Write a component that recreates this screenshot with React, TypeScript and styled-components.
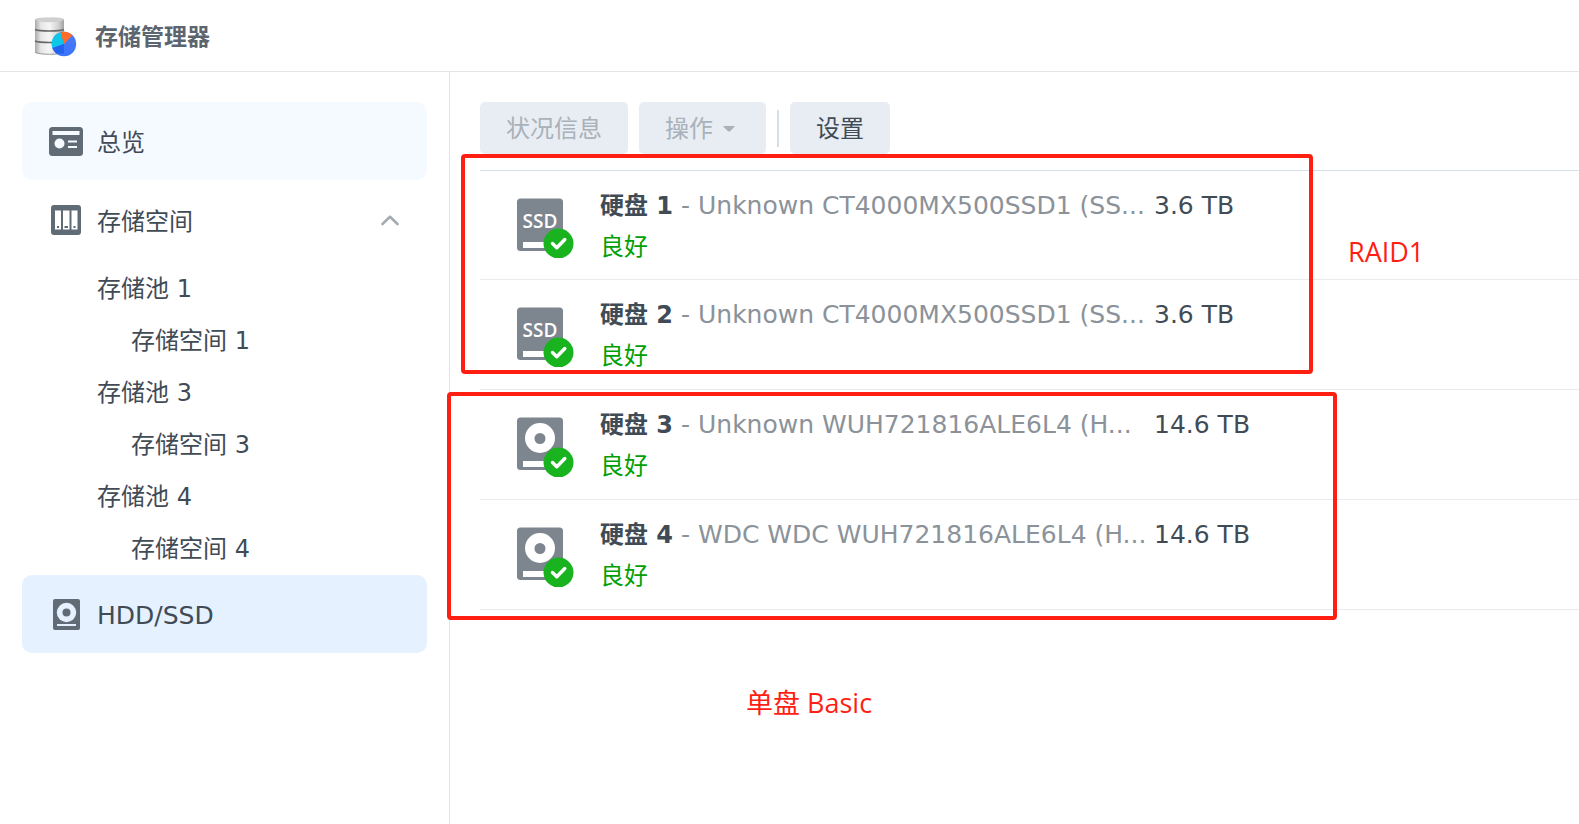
import React from "react";
import styled, { createGlobalStyle, css } from "styled-components";

const GlobalStyle = createGlobalStyle`
  *, *::before, *::after { box-sizing: border-box; }
  html, body { margin: 0; background: #fff; }
  body, button {
    font-family: "DejaVu Sans", "Noto Sans CJK SC", sans-serif;
    font-size: 24px;
    line-height: 32px;
    color: #414b55;
  }
`;

const Page = styled.div`
  min-height: 100vh;
  display: flex;
  flex-direction: column;
`;

const Header = styled.header`
  display: flex;
  align-items: center;
  gap: 18px;
  height: 72px;
  padding: 2px 34px 0;
  border-bottom: 1px solid #e3e5e7;
`;

const Title = styled.h1`
  margin: 0;
  font-size: 23px;
  line-height: 32px;
  font-weight: 700;
  color: #5c656f;
`;

const Body = styled.div`
  flex: 1;
  display: flex;
`;

const Sidebar = styled.nav`
  flex: none;
  display: flex;
  flex-direction: column;
  gap: 1px;
  width: 450px;
  padding: 30px 22px;
  border-right: 1px solid #e3e6e9;
`;

const itemState = {
  plain: "transparent",
  hovered: "#f4faff",
  selected: "#e5f1fe",
};

const NavItem = styled.button<{ $state: keyof typeof itemState }>`
  display: flex;
  align-items: center;
  width: 100%;
  height: 78px;
  padding: 0 28px 0 27px;
  border: 0;
  border-radius: 10px;
  background: ${(p) => itemState[p.$state]};
  text-align: left;
  cursor: pointer;
`;

const NavIcon = styled.span`
  display: flex;
  justify-content: center;
  width: 34px;
  margin-right: 14px;
`;

const NavLabel = styled.span<{ $latin?: boolean }>`
  flex: 1;
  padding-top: 3px;
  font-size: ${(p) => (p.$latin ? 25 : 24)}px;
`;

const SubList = styled.ul`
  margin: 0;
  padding: 2px 0 0;
  list-style: none;
`;

const SubItem = styled.button<{ $nested?: boolean }>`
  display: block;
  width: 100%;
  height: 52px;
  padding: 2px 0 0 ${(p) => (p.$nested ? 109 : 75)}px;
  border: 0;
  background: none;
  text-align: left;
  cursor: pointer;
`;

const Main = styled.main`
  position: relative;
  flex: 1;
  min-width: 0;
  padding: 30px 0 0 30px;
`;

const Toolbar = styled.div`
  display: flex;
  align-items: center;
  gap: 11px;
  margin-bottom: 16px;
`;

const ToolButton = styled.button<{ $menu?: boolean }>`
  display: flex;
  align-items: center;
  gap: 10px;
  height: 52px;
  padding: 2px ${(p) => (p.$menu ? 31 : 26)}px 0 26px;
  border: 0;
  border-radius: 5px;
  background: #e8edf4;
  cursor: pointer;
  &:disabled {
    color: #a9b1b9;
    cursor: default;
  }
`;

const Divider = styled.span`
  width: 2px;
  height: 37px;
  background: #d3dfe9;
`;

const DriveTable = styled.table`
  width: 100%;
  table-layout: fixed;
  border-collapse: separate;
  border-spacing: 0;
  border-top: 1px solid #d5e1ea;
`;

const DriveRow = styled.tr`
  height: 110px;
  &:first-child {
    height: 109px;
  }
`;

const cell = css`
  padding: 0;
  vertical-align: top;
  border-bottom: 1px solid #e9ebee;
`;

const IconCell = styled.td`
  ${cell}
  width: 120px;
  padding: 27px 0 0 37px;
`;

const NameCell = styled.td`
  ${cell}
  width: 554px;
  padding-top: 19px;
  white-space: nowrap;
`;

const SizeCell = styled.td`
  ${cell}
  padding-top: 19px;
  font-size: 25px;
`;

const DriveName = styled.div`
  height: 32px;
  color: #414b55;
`;

const Model = styled.span`
  font-size: 25px;
  color: #8b9299;
`;

const Status = styled.div`
  margin-top: 9px;
  color: #00a005;
`;

const Frame = styled.div<{ $x: number; $y: number; $w: number; $h: number }>`
  position: absolute;
  left: ${(p) => p.$x}px;
  top: ${(p) => p.$y}px;
  width: ${(p) => p.$w}px;
  height: ${(p) => p.$h}px;
  border: 4px solid #ff1e12;
  border-radius: 4px;
  pointer-events: none;
`;

const Note = styled.div<{ $x: number; $y: number }>`
  position: absolute;
  left: ${(p) => p.$x}px;
  top: ${(p) => p.$y}px;
  font-family: "Open Sans", "Noto Sans CJK SC", sans-serif;
  font-size: 27px;
  line-height: 36px;
  color: #ff1e12;
  white-space: nowrap;
`;

const Svg = styled.svg`
  display: block;
  flex: none;
`;

function AppLogo() {
  return (
    <Svg width="43" height="42" viewBox="0 0 43 42" aria-hidden="true">
      <defs>
        <linearGradient id="metal" x1="0" x2="1">
          <stop offset="0" stopColor="#a9a9a9" />
          <stop offset="0.2" stopColor="#e6e6e6" />
          <stop offset="0.5" stopColor="#f6f6f6" />
          <stop offset="0.8" stopColor="#d2d2d2" />
          <stop offset="1" stopColor="#a2a2a2" />
        </linearGradient>
        <linearGradient id="pie" x1="0" x2="0" y1="0" y2="1">
          <stop offset="0" stopColor="#4a7dfa" />
          <stop offset="1" stopColor="#3a74fb" />
        </linearGradient>
      </defs>
      <path d="M1 4C1 0 30 0 30 4V36C30 39.500 1 39.500 1 36Z" fill="url(#metal)" />
      <ellipse cx="15.500" cy="3.800" rx="14" ry="2.400" fill="#cfcfcf" />
      <path d="M1 13.500C6 15.500 25 15.500 30 13.500" fill="none" stroke="#666" strokeWidth="1.500" />
      <path d="M1 25C6 27 25 27 30 25" fill="none" stroke="#666" strokeWidth="1.500" />
      <path d="M1 36C3 39 28 39 30 36" fill="none" stroke="#9a9a9a" strokeWidth="1" />
      <circle cx="30" cy="28" r="12.200" fill="url(#pie)" />
      <path d="M30 28L26.500 16.300A12.200 12.200 0 0 0 18.400 32Z" fill="#0cc8e8" />
      <path d="M30 28L26.500 16.300A12.200 12.200 0 0 1 38.500 19.200Z" fill="#ff6d28" />
      <path d="M30 28L18.400 32A12.200 12.200 0 0 0 22.500 37.500H30Z" fill="#2463ef" />
    </Svg>
  );
}

function OverviewIcon() {
  return (
    <Svg width="34" height="29" viewBox="0 0 34 29" aria-hidden="true">
      <rect width="34" height="29" rx="3.500" fill="#616b76" />
      <rect x="3.500" y="4" width="27" height="4" fill="#f4faff" />
      <circle cx="10.500" cy="16.500" r="5" fill="#f4faff" />
      <path d="M19 14.500h9M19 20h9" stroke="#f4faff" strokeWidth="2" />
    </Svg>
  );
}

function VolumeIcon() {
  return (
    <Svg width="30" height="30" viewBox="0 0 30 30" aria-hidden="true">
      <rect width="30" height="30" rx="3" fill="#616b76" />
      <path d="M4 5.500h6v19h-6zM12 5.500h6.500v19h-6.500zM20.500 5.500h6v19h-6z" fill="#fff" />
      <path d="M6 21h2v2h-2zM13.500 21h3.500v2h-3.500zM22.500 21h2v2h-2z" fill="#616b76" />
    </Svg>
  );
}

function DiskIcon() {
  return (
    <Svg width="27" height="31" viewBox="0 0 27 31" aria-hidden="true">
      <rect width="27" height="31" rx="2" fill="#616b76" />
      <circle cx="13.500" cy="13.500" r="9.700" fill="#e5f1fe" />
      <circle cx="13.500" cy="13.500" r="4" fill="#616b76" />
      <path d="M4 26h19" stroke="#e5f1fe" strokeWidth="2" />
    </Svg>
  );
}

function ChevronUp() {
  return (
    <Svg width="18" height="11" viewBox="0 0 18 11" aria-hidden="true">
      <path d="M1.500 9L9 1.800L16.500 9" fill="none" stroke="#a4abb1" strokeWidth="2.600" strokeLinecap="round" strokeLinejoin="round" />
    </Svg>
  );
}

function Caret() {
  return (
    <Svg width="12" height="6" viewBox="0 0 12 6" aria-hidden="true">
      <path d="M1 0H11Q12 .2 11.400 1L7 5.300Q6 6 5 5.300L.6 1Q0 .2 1 0Z" fill="#a9b1b9" />
    </Svg>
  );
}

function DriveIcon({ kind }: { kind: "ssd" | "hdd" }) {
  return (
    <Svg width="57" height="60" viewBox="0 0 57 60" role="img" aria-label={kind}>
      <rect y="0.500" width="46" height="52.500" rx="3.500" fill="#7d868f" />
      {kind === "ssd" ? (
        <text x="23" y="30" textAnchor="middle" fontFamily="Open Sans, sans-serif" fontSize="19" fontWeight="600" fill="#fff">
          SSD
        </text>
      ) : (
        <>
          <circle cx="23" cy="21" r="15" fill="#fff" />
          <circle cx="23" cy="21.500" r="5.500" fill="#7d868f" />
        </>
      )}
      <rect x="6" y="44" width="26" height="6" fill="#fff" />
      <circle cx="41.500" cy="45.500" r="15" fill="#18b31e" />
      <path d="M35.500 45.500L39.800 49.800L47.800 41.500" fill="none" stroke="#fff" strokeWidth="3.400" strokeLinecap="round" strokeLinejoin="round" />
    </Svg>
  );
}

const pools = [1, 3, 4];

const drives: { id: number; model: string; size: string; kind: "ssd" | "hdd" }[] = [
  { id: 1, model: "Unknown CT4000MX500SSD1 (SS...", size: "3.6 TB", kind: "ssd" },
  { id: 2, model: "Unknown CT4000MX500SSD1 (SS...", size: "3.6 TB", kind: "ssd" },
  { id: 3, model: "Unknown WUH721816ALE6L4 (H...", size: "14.6 TB", kind: "hdd" },
  { id: 4, model: "WDC WDC WUH721816ALE6L4 (H...", size: "14.6 TB", kind: "hdd" },
];

export default function App() {
  return (
    <Page>
      <GlobalStyle />
      <Header>
        <AppLogo />
        <Title>存储管理器</Title>
      </Header>
      <Body>
        <Sidebar>
          <NavItem $state="hovered">
            <NavIcon><OverviewIcon /></NavIcon>
            <NavLabel>总览</NavLabel>
          </NavItem>
          <NavItem $state="plain" aria-expanded="true">
            <NavIcon><VolumeIcon /></NavIcon>
            <NavLabel>存储空间</NavLabel>
            <ChevronUp />
          </NavItem>
          <SubList>
            {pools.map((n) => (
              <li key={n}>
                <SubItem>存储池 {n}</SubItem>
                <SubItem $nested>存储空间 {n}</SubItem>
              </li>
            ))}
          </SubList>
          <NavItem $state="selected" aria-current="page">
            <NavIcon><DiskIcon /></NavIcon>
            <NavLabel $latin>HDD/SSD</NavLabel>
          </NavItem>
        </Sidebar>
        <Main>
          <Toolbar>
            <ToolButton disabled>状况信息</ToolButton>
            <ToolButton disabled $menu>
              操作
              <Caret />
            </ToolButton>
            <Divider />
            <ToolButton>设置</ToolButton>
          </Toolbar>
          <DriveTable>
            <tbody>
              {drives.map((d) => (
                <DriveRow key={d.id}>
                  <IconCell><DriveIcon kind={d.kind} /></IconCell>
                  <NameCell>
                    <DriveName><b>硬盘 {d.id}</b><Model> - {d.model}</Model></DriveName>
                    <Status>良好</Status>
                  </NameCell>
                  <SizeCell>{d.size}</SizeCell>
                </DriveRow>
              ))}
            </tbody>
          </DriveTable>
          <Frame $x={11} $y={82} $w={852} $h={220} />
          <Frame $x={-3} $y={320} $w={890} $h={228} />
          <Note $x={898} $y={162}>RAID1</Note>
          <Note $x={296} $y={613}>单盘 Basic</Note>
        </Main>
      </Body>
    </Page>
  );
}
